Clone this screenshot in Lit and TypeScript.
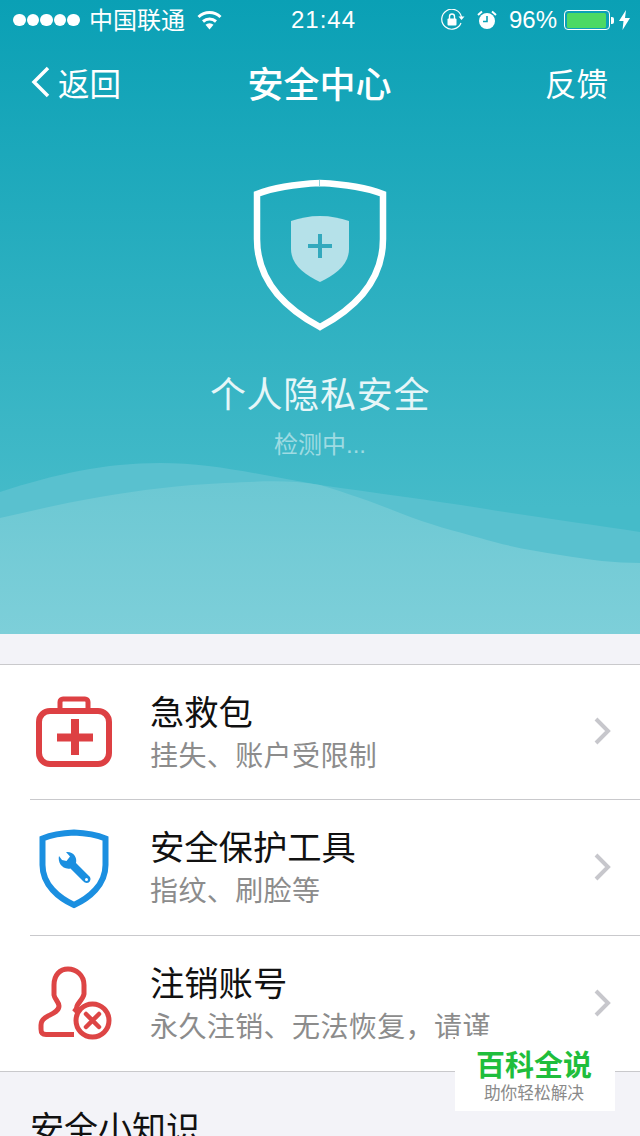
import { LitElement, html, css, svg } from "lit";
import { customElement } from "lit/decorators.js";

const chevron = html`<svg class="chev" width="18" height="30" viewBox="0 0 18 30"><path d="M3 3 L15 15 L3 27" fill="none" stroke="#c7c7cc" stroke-width="4"/></svg>`;

const kit = svg`<svg width="80" height="72" viewBox="0 0 80 72">
  <path d="M24 14 V6 a3 3 0 0 1 3-3 H49 a3 3 0 0 1 3 3 V14" fill="none" stroke="#dd4043" stroke-width="5"/>
  <rect x="3" y="15" width="70" height="53" rx="11" fill="none" stroke="#dd4043" stroke-width="6"/>
  <path d="M21 41.500 H57 M39 23 V59" fill="none" stroke="#dd4043" stroke-width="8"/>
</svg>`;

const tool = svg`<svg width="70" height="80" viewBox="0 0 70 80">
  <path d="M35 3.500 C24 4 12 6 3.500 9.500 V36 C3.500 56 20 69 35 76 C50 69 66.500 56 66.500 36 V9.500 C58 6 46 4 35 3.500 Z" fill="none" stroke="#1b8fe0" stroke-width="6"/>
  <path d="M20 27 C18.500 33 23 41 31.500 39.500 L44 52 C46 54.500 50 54.500 51 52 C52 50 51.500 48 50 47 L37 34 C38.500 28 34 22 27 23 L31 27.500 L27.500 32 L23 31 Z" fill="#1b8fe0"/>
  <circle cx="47.500" cy="50.500" r="1.500" fill="#fff"/>
</svg>`;

const person = svg`<svg width="76" height="78" viewBox="0 0 76 78">
  <path d="M36 69.500 H8 C4.500 69.500 3 68 3 64 V60 C3 55 6 53 10 51 C15 48.500 21 46 21 41 C21 37 16.500 34 16 30 V20 C16 10 22 4 30 4 C38 4 46 10 46 20 V29 C45 34 40 38 39 41 C39 43 38 45 36 47" fill="none" stroke="#dd4545" stroke-width="5" stroke-linejoin="round"/>
  <circle cx="54.500" cy="55.500" r="16.500" fill="#fff" stroke="#dd4545" stroke-width="5"/>
  <path d="M48 49 L61 62 M61 49 L48 62" stroke="#dd4545" stroke-width="4.500" stroke-linecap="round"/>
</svg>`;

const rows = [
  { icon: kit, title: "急救包", sub: "挂失、账户受限制", cls: "i1" },
  { icon: tool, title: "安全保护工具", sub: "指纹、刷脸等", cls: "i2" },
  { icon: person, title: "注销账号", sub: "永久注销、无法恢复，请谨", cls: "i3" },
];

@customElement("app-root")
export class AppRoot extends LitElement {
  static styles = css`
    :host {
      display: block;
      position: relative;
      width: 640px;
      height: 1136px;
      overflow: hidden;
      background: #f3f3f8;
      font-family: "Liberation Sans", "Noto Sans CJK SC", sans-serif;
    }
    .hero {
      position: relative;
      height: 634px;
      background: linear-gradient(180deg, #0aa0b5 0%, #45bbc9 80%);
      color: #fff;
      display: flex;
      flex-direction: column;
      align-items: center;
    }
    .waves { position: absolute; left: 0; top: 440px; }
    .status {
      position: relative;
      width: 100%;
      height: 40px;
      box-sizing: border-box;
      padding: 0 10px 0 13px;
      display: flex;
      align-items: center;
      font-size: 24px;
    }
    .dots { display: flex; gap: 1px; width: 76px; }
    .dot { width: 12.500px; height: 12.500px; border-radius: 50%; background: #fff; }
    .carrier { width: 109px; padding-bottom: 3px; }
    .wifi { margin-left: -1px; }
    .time { position: absolute; left: 291px; font-weight: 500; letter-spacing: 1px; }
    .right { margin-left: auto; display: flex; align-items: center; }
    .alarm { margin-left: 12px; }
    .pct { margin: 0 7px 0 12px; }
    .batt {
      width: 46px; height: 20px; box-sizing: border-box;
      border: 1.500px solid #fff; border-radius: 4px; padding: 1.500px;
    }
    .batt div { width: 96%; height: 100%; background: #4cd964; border-radius: 1.500px; }
    .nub { width: 3px; height: 7px; background: #fff; margin: 0 5px 0 1px; border-radius: 0 2px 2px 0; }
    .nav {
      position: relative;
      width: 100%;
      height: 84px;
      box-sizing: border-box;
      padding: 0 32px 0 31px;
      display: grid;
      grid-template-columns: 1fr auto 1fr;
      align-items: center;
      font-size: 31.500px;
    }
    .back { display: flex; align-items: center; gap: 7px; }
    .title { font-size: 36px; font-weight: 500; }
    .fb { justify-self: end; }
    .shield { position: relative; margin-top: 55px; display: block; }
    .h1 { position: relative; margin-top: 38px; font-size: 36px; letter-spacing: 0.7px; line-height: 54px; color: #e6f6f8; }
    .h2 { position: relative; margin-top: 7px; font-size: 24px; line-height: 30px; color: rgba(255, 255, 255, 0.5); }
    .list {
      margin-top: 30px;
      background: #fff;
      border-top: 1px solid #c9c9cc;
      border-bottom: 1px solid #c9c9cc;
    }
    .row {
      display: flex;
      align-items: center;
      height: 134px;
      box-sizing: border-box;
      margin-left: 30px;
      position: relative;
    }
    .row + .row { border-top: 1px solid #c9c9cc; height: 136px; }
    .ic { width: 120px; flex: none; display: flex; }
    .i1 svg { margin-left: 6px; }
    .i2 svg { margin-left: 9px; margin-top: 2px; }
    .i3 svg { margin-left: 8px; }
    .txt { flex: 1; white-space: nowrap; overflow: hidden; padding-top: 5px; }
    .t { font-size: 34.300px; line-height: 44px; color: #111; }
    .s { font-size: 28px; line-height: 44px; color: #8c8c8c; letter-spacing: 0.4px; }
    .chev { margin: 0 29px 2px 0; flex: none; }
    .tips { padding: 33px 0 0 30px; font-size: 34px; line-height: 48px; color: #111; }
    .mark {
      position: absolute;
      left: 455px;
      top: 1036px;
      width: 160px;
      height: 75px;
      box-sizing: border-box;
      padding: 13px 2px 0 0;
      background: #fff;
      text-align: center;
    }
    .m1 { font-size: 29px; line-height: 34px; font-weight: 700; color: #1fbe3c; }
    .m2 { font-size: 16.700px; line-height: 20px; color: #8a8a8a; margin-top: 1px; }
  `;

  render() {
    return html`
      <div class="hero">
        <svg class="waves" width="640" height="194" viewBox="0 0 640 194">
          <defs>
            <linearGradient id="wg" x1="0" y1="0" x2="0" y2="1">
              <stop offset="0" stop-color="#6cc8d3" />
              <stop offset="1" stop-color="#7dcfd9" />
            </linearGradient>
          </defs>
          <path d="M0 52 C55 34 105 23 160 23 C215 23 265 36 320 45 C375 53 430 60 480 68 C535 77 590 84 640 92 V194 H0 Z" fill="#59c1cf" />
          <path d="M0 78 C35 70 70 62 100 57 C140 50 180 45 225 43 C265 41 290 40 320 45 C350 54 375 63 400 73 C430 85 455 91 480 98 C510 107 535 111 560 115 C590 120 615 123 640 123 V194 H0 Z" fill="url(#wg)" />
        </svg>
        <div class="status">
          <div class="dots">${[0, 1, 2, 3, 4].map(() => html`<div class="dot"></div>`)}</div>
          <div class="carrier">中国联通</div>
          <svg class="wifi" width="25" height="20" viewBox="0 0 25 20">
            <path d="M12.500 19.500 L8.500 14.800 A5.800 5.800 0 0 1 16.500 14.800 Z" fill="#fff" />
            <path d="M6 11.500 A10 10 0 0 1 19 11.500 M1.500 7 A16 16 0 0 1 23.500 7" fill="none" stroke="#fff" stroke-width="3" />
          </svg>
          <div class="time">21:44</div>
          <div class="right">
            <svg width="24" height="22" viewBox="0 0 24 22">
              <path d="M20 14 A10 10 0 1 1 20.500 8" fill="none" stroke="#fff" stroke-width="1.200" />
              <path d="M17.500 7.500 H23.500 L20.500 11 Z" fill="#fff" />
              <rect x="6.500" y="9.500" width="9" height="7" rx="1" fill="#fff" />
              <path d="M8.500 10 V7.500 a2.500 2.500 0 0 1 5 0 V10" fill="none" stroke="#fff" stroke-width="1.400" />
            </svg>
            <svg class="alarm" width="20" height="20" viewBox="0 0 20 20">
              <circle cx="10" cy="11" r="8" fill="#fff" />
              <path d="M10 6 V11.500 H6" fill="none" stroke="#0ba1b5" stroke-width="1.600" />
              <path d="M1 5 L5 1.500 M19 5 L15 1.500" stroke="#fff" stroke-width="2" />
            </svg>
            <div class="pct">96%</div>
            <div class="batt"><div></div></div>
            <div class="nub"></div>
            <svg width="11" height="20" viewBox="0 0 11 20"><path d="M7 0 L0 11 H4.500 L3.500 20 L11 8 H6 Z" fill="#fff" /></svg>
          </div>
        </div>
        <div class="nav">
          <div class="back">
            <svg width="20" height="32" viewBox="0 0 20 32"><path d="M17 2 L3 16 L17 30" fill="none" stroke="#fff" stroke-width="3.500" /></svg>
            <span>返回</span>
          </div>
          <div class="title">安全中心</div>
          <div class="fb">反馈</div>
        </div>
        <svg class="shield" width="134" height="152" viewBox="0 0 134 152">
          <path d="M67 4 C47 5 22 8 4 15 V60 C4 105 37 132 67 148 C97 132 130 105 130 60 V15 C112 8 87 5 67 4 Z" fill="none" stroke="#fff" stroke-width="6.500" />
          <path d="M66.500 1 V7" stroke="#8fd3dc" stroke-width="1" />
          <path d="M67 37 C56 37 47 39 38 42 V70 C38 86 52 96 67 103 C82 96 96 86 96 70 V42 C87 39 78 37 67 37 Z" fill="#b5e1e9" />
          <path d="M55 67 H79 M67 55 V79" stroke="#33a9bd" stroke-width="4" />
        </svg>
        <div class="h1">个人隐私安全</div>
        <div class="h2">检测中...</div>
      </div>
      <div class="list">
        ${rows.map(
          (r) => html`<div class="row">
            <div class="ic ${r.cls}">${r.icon}</div>
            <div class="txt">
              <div class="t">${r.title}</div>
              <div class="s">${r.sub}</div>
            </div>
            ${chevron}
          </div>`
        )}
      </div>
      <div class="tips">安全小知识</div>
      <div class="mark">
        <div class="m1">百科全说</div>
        <div class="m2">助你轻松解决</div>
      </div>
    `;
  }
}
